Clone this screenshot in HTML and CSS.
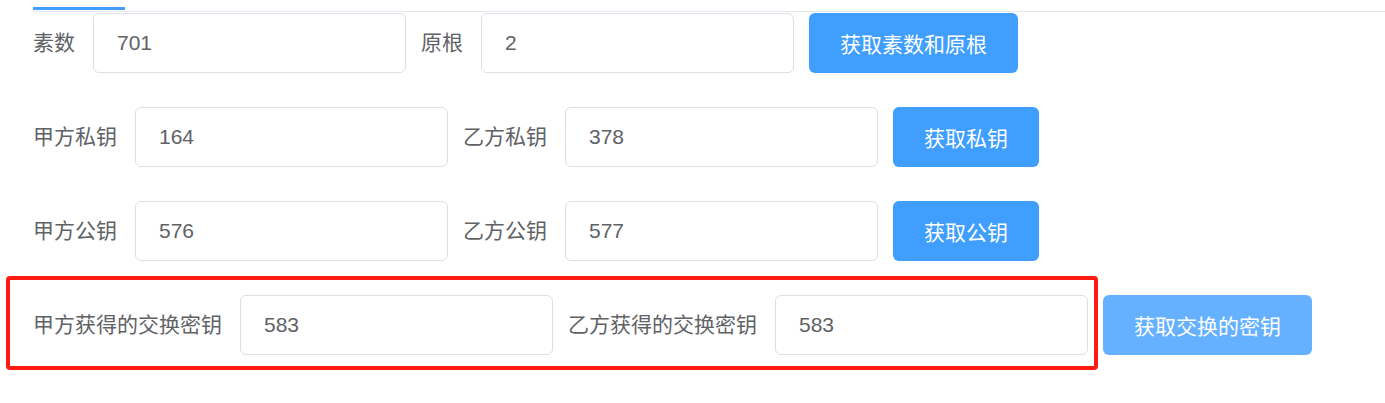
FILE: index.html
```html
<!DOCTYPE html>
<html lang="zh-CN">
<head>
<meta charset="utf-8">
<title>Diffie-Hellman</title>
<link rel="stylesheet" href="styles.css">
</head>
<body>
<div class="page">
  <div class="tabs-header"><div class="active-bar"></div></div>
  <form class="form">
    <div class="row">
      <div class="item"><label class="label">素数</label><input class="input" value="701"></div>
      <div class="item"><label class="label">原根</label><input class="input" value="2"></div>
      <button type="button" class="btn">获取素数和原根</button>
    </div>
    <div class="row">
      <div class="item"><label class="label">甲方私钥</label><input class="input" value="164"></div>
      <div class="item"><label class="label">乙方私钥</label><input class="input" value="378"></div>
      <button type="button" class="btn">获取私钥</button>
    </div>
    <div class="row">
      <div class="item"><label class="label">甲方公钥</label><input class="input" value="576"></div>
      <div class="item"><label class="label">乙方公钥</label><input class="input" value="577"></div>
      <button type="button" class="btn">获取公钥</button>
    </div>
    <div class="row row-last">
      <div class="highlight"></div>
      <div class="item"><label class="label">甲方获得的交换密钥</label><input class="input" value="583"></div>
      <div class="item"><label class="label">乙方获得的交换密钥</label><input class="input" value="583"></div>
      <button type="button" class="btn btn-light">获取交换的密钥</button>
    </div>
  </form>
</div>
</body>
</html>
```

FILE: styles.css
```css
* { box-sizing: border-box; }
html, body { margin: 0; padding: 0; background: #fff; }
body {
  font-family: "Liberation Sans", "Noto Sans CJK SC", sans-serif;
  color: #606266;
  min-height: 403px;
}
.page { padding-left: 33px; padding-bottom: 48px; }
.tabs-header {
  box-sizing: content-box;
  padding-top: 7px;
  height: 4px;
  border-bottom: 1px solid #e4e7ed;
}
.active-bar { width: 92px; height: 3px; background: #409eff; }
.form {
  margin-top: 1px;
  display: flex;
  flex-direction: column;
  gap: 34px;
}
.row {
  display: flex;
  align-items: center;
  height: 60px;
}
.row-last { position: relative; }
.item {
  display: flex;
  align-items: center;
  margin-right: 15px;
}
.label {
  font-size: 21px;
  line-height: 60px;
  padding-right: 18px;
  color: #606266;
  white-space: nowrap;
}
.input {
  width: 313px;
  height: 60px;
  border: 1px solid #dcdfe6;
  border-radius: 6px;
  padding: 0 23px;
  font-family: "Liberation Sans", "Noto Sans CJK SC", sans-serif;
  font-size: 21px;
  color: #606266;
  background: #fff;
  outline: none;
}
.btn {
  height: 60px;
  padding: 0 31px;
  border: 0;
  border-radius: 6px;
  background: #409eff;
  color: #fff;
  font-family: "Noto Sans CJK SC", "Liberation Sans", sans-serif;
  font-size: 21px;
  cursor: pointer;
  white-space: nowrap;
}
.btn-light { background: #66b1ff; }
.highlight {
  position: absolute;
  left: -27px;
  top: -19px;
  width: 1092px;
  height: 94px;
  border: 4px solid #ff1a12;
  border-radius: 4px;
  pointer-events: none;
}
```
